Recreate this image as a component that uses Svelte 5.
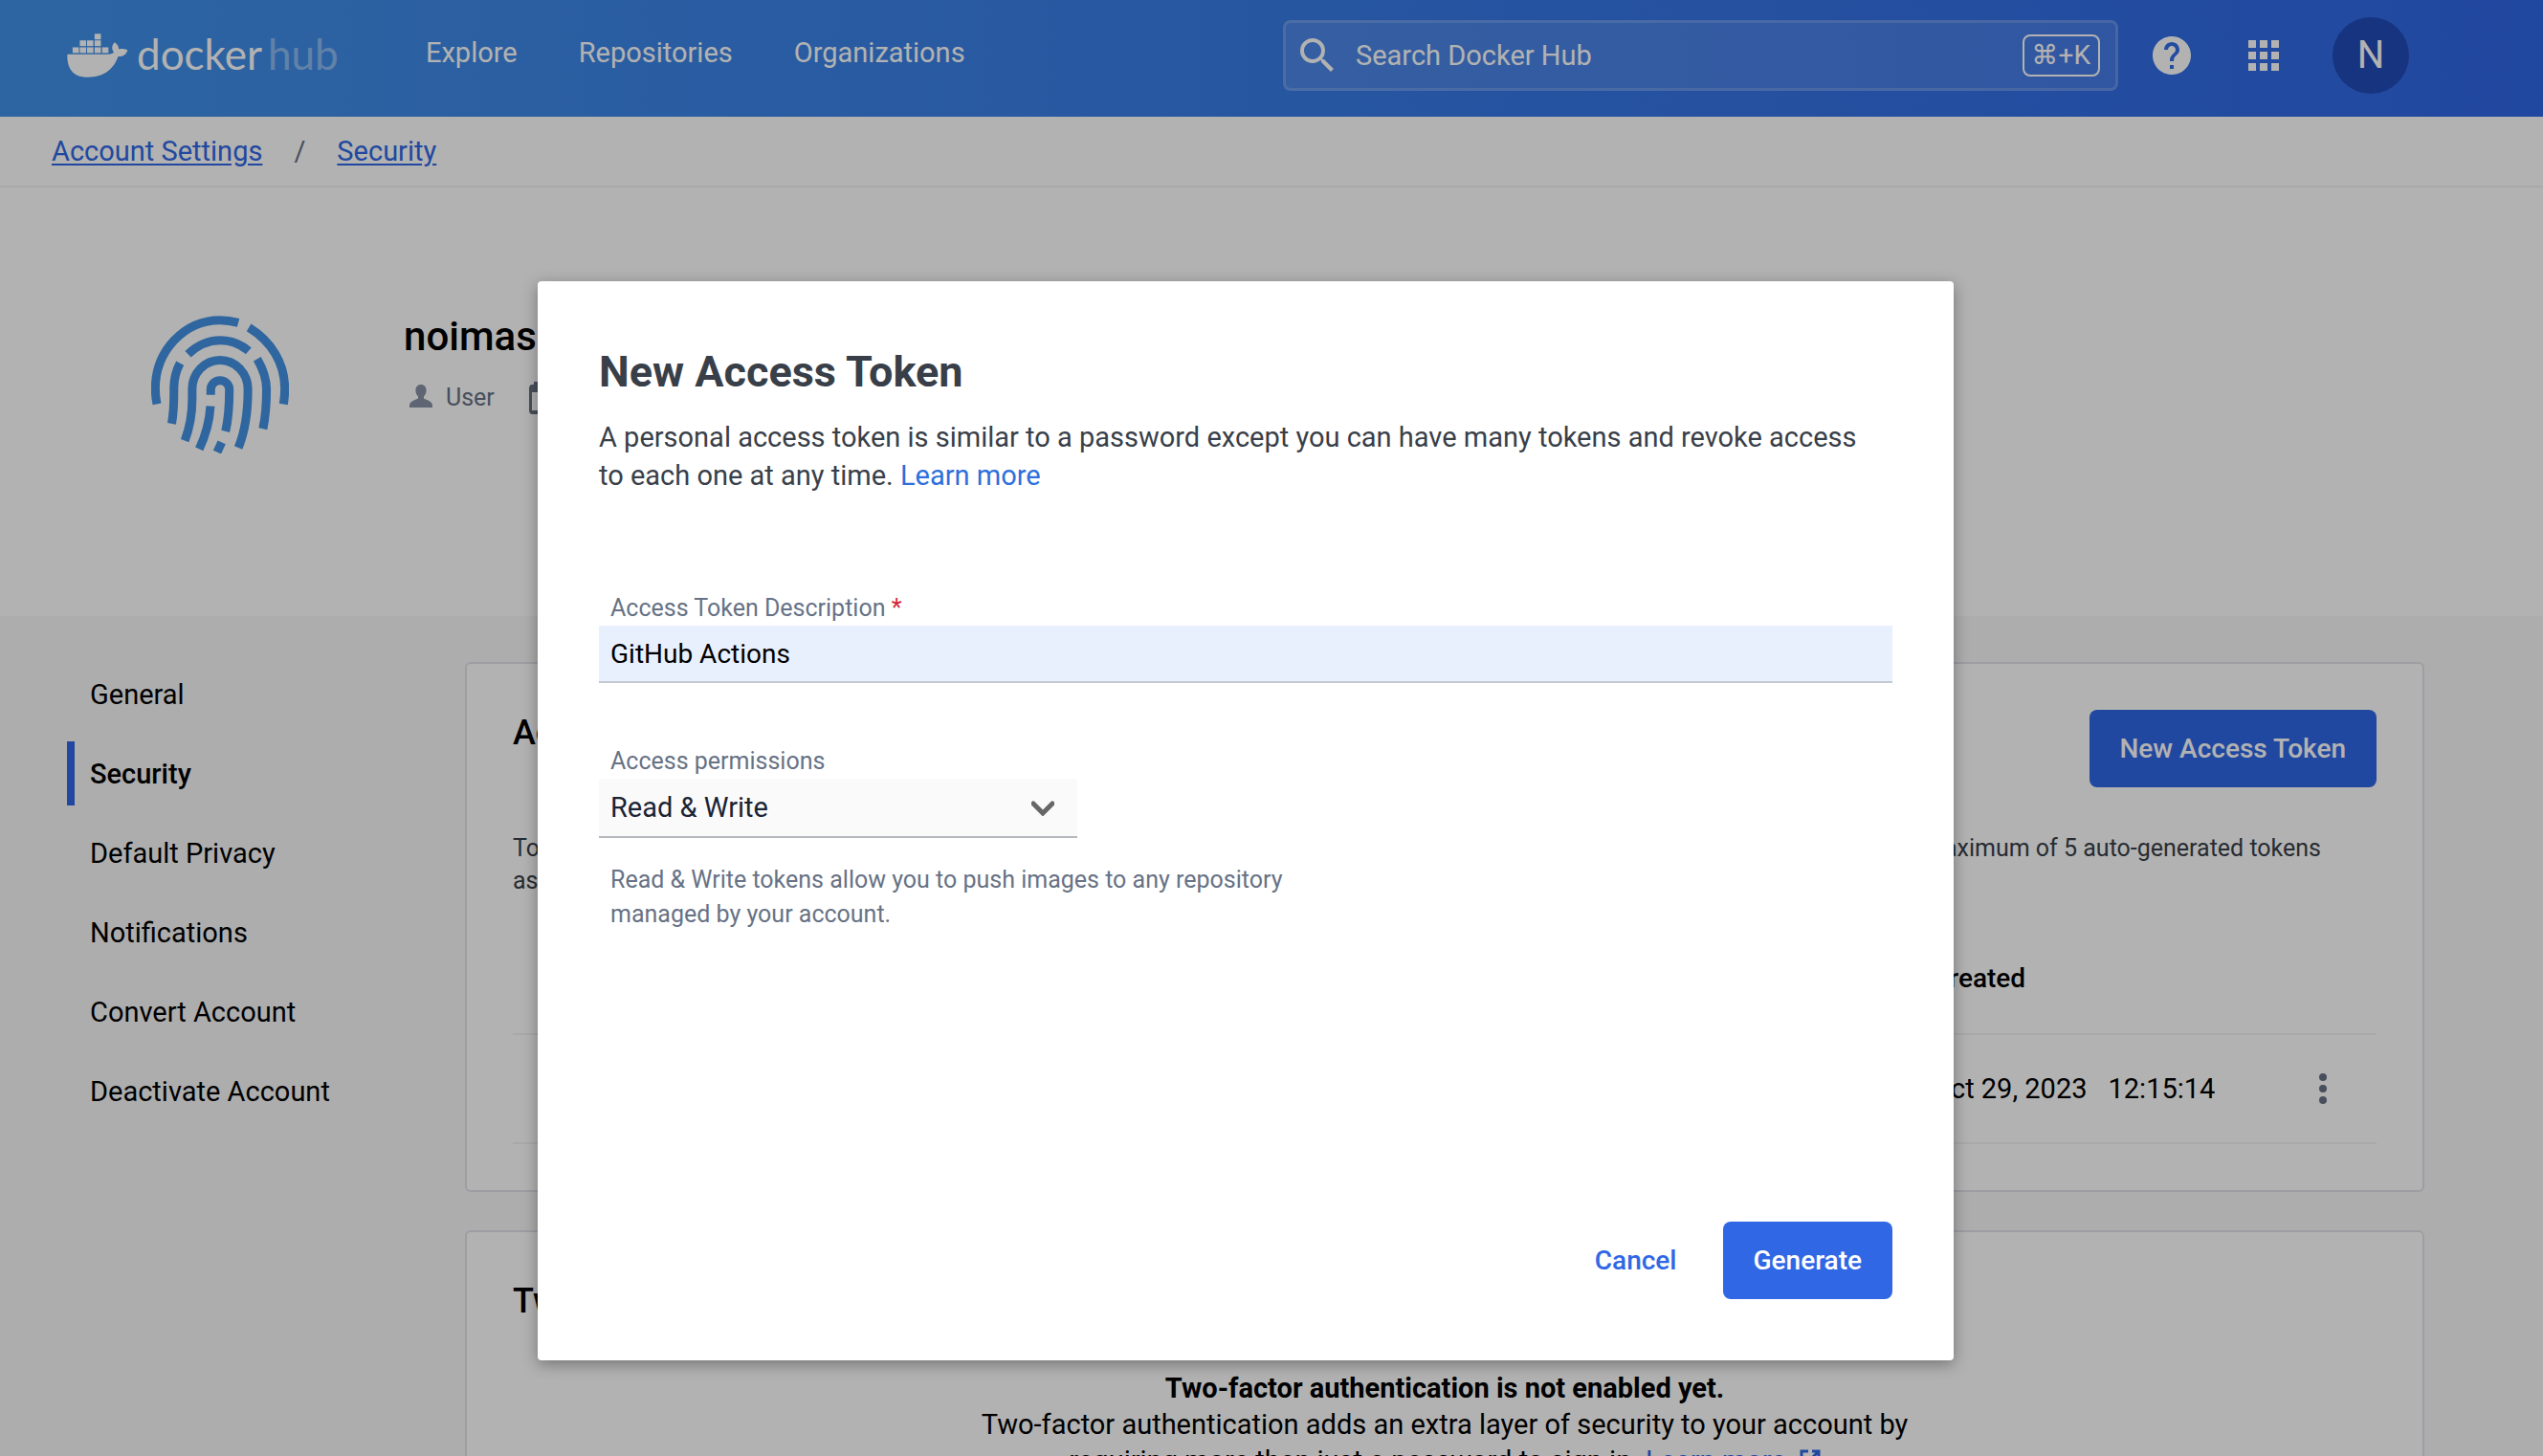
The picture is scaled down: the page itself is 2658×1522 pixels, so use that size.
<script>
  const navLinks = ['Explore', 'Repositories', 'Organizations'];
  const settings = [
    'General',
    'Security',
    'Default Privacy',
    'Notifications',
    'Convert Account',
    'Deactivate Account'
  ];
  const active = 'Security';

  let description = $state('GitHub Actions');
  let permission = $state('Read & Write');
</script>

<div class="page">
  <header class="topbar">
    <a class="brand" href="#home" aria-label="Docker Hub home">
      <svg class="whale" viewBox="60 44 193 140" aria-hidden="true">
        <rect x="147" y="45" width="20" height="18" />
        <rect x="100" y="66" width="20" height="18" />
        <rect x="123" y="66" width="20" height="18" />
        <rect x="147" y="66" width="20" height="18" />
        <rect x="77" y="88" width="20" height="18" />
        <rect x="100" y="88" width="20" height="18" />
        <rect x="123" y="88" width="20" height="18" />
        <rect x="147" y="88" width="20" height="18" />
        <rect x="171" y="88" width="20" height="18" />
        <path
          d="M63 110H190C200 110 206 107 208 104C200 92 202 80 211 72C220 79 224 86 224 94C234 91 245 93 252 97C248 111 236 118 222 117C208 155 180 183 125 183C80 183 60 158 60 113Q60 110 63 110Z"
        />
      </svg>
      <span class="wordmark">docker<span class="hub">hub</span></span>
    </a>
    <nav class="main-nav" aria-label="Main">
      {#each navLinks as link}
        <a href="#{link.toLowerCase()}">{link}</a>
      {/each}
    </nav>
    <label class="search">
      <svg class="icon" viewBox="0 0 24 24" aria-hidden="true">
        <path
          d="M15.5 14h-.79l-.28-.27A6.471 6.471 0 0 0 16 9.5 6.5 6.5 0 1 0 9.5 16c1.61 0 3.09-.59 4.23-1.57l.27.28v.79l5 4.99L20.49 19l-4.99-5zm-6 0C7.01 14 5 11.99 5 9.5S7.01 5 9.5 5 14 7.01 14 9.5 11.99 14 9.5 14z"
        />
      </svg>
      <input type="search" placeholder="Search Docker Hub" aria-label="Search Docker Hub" />
      <kbd>⌘+K</kbd>
    </label>
    <div class="tools">
      <button class="plain" aria-label="Help">
        <svg class="icon" viewBox="0 0 24 24" aria-hidden="true">
          <path
            d="M12 2C6.48 2 2 6.48 2 12s4.48 10 10 10 10-4.48 10-10S17.52 2 12 2zm1 17h-2v-2h2v2zm2.07-7.75l-.9.92C13.45 12.9 13 13.5 13 15h-2v-.5c0-1.1.45-2.1 1.17-2.83l1.24-1.26c.37-.36.59-.86.59-1.41 0-1.1-.9-2-2-2s-2 .9-2 2H8c0-2.21 1.79-4 4-4s4 1.79 4 4c0 .88-.36 1.68-.93 2.25z"
          />
        </svg>
      </button>
      <button class="plain" aria-label="Apps">
        <svg class="icon" viewBox="0 0 24 24" aria-hidden="true">
          <path
            d="M4 8h4V4H4v4zm6 12h4v-4h-4v4zm-6 0h4v-4H4v4zm0-6h4v-4H4v4zm6 0h4v-4h-4v4zm6-10v4h4V4h-4zm-6 4h4V4h-4v4zm6 6h4v-4h-4v4zm0 6h4v-4h-4v4z"
          />
        </svg>
      </button>
      <button class="avatar" aria-label="Account menu">N</button>
    </div>
  </header>

  <nav class="crumbs" aria-label="Breadcrumb">
    <a href="#account">Account Settings</a>
    <span>/</span>
    <a href="#security">Security</a>
  </nav>

  <section class="profile">
    <svg class="fingerprint" viewBox="85 60 430 430" aria-hidden="true">
      <path d="M103 336Q98 312 98 288A202 214 0 0 1 300 74Q328 74 357 82" />
      <path d="M390 97C460 140 502 208 502 288Q502 312 498 336" />
      <path d="M200 180Q246 137 300 137Q350 137 389 170" />
      <path d="M175 208Q156 245 156 285C156 325 157 355 149 397" />
      <path d="M416 195Q445 245 445 290Q445 360 434 413" />
      <path d="M190 450Q213 390 213 320V290A87 91 0 0 1 387 290Q387 400 357 472" />
      <path d="M271 307V290A29 28 0 0 1 329 290Q329 370 317 421" />
      <path d="M270 342Q266 410 235 476" />
      <path d="M305 455L291 486" />
    </svg>
    <div class="who">
      <h1>noimas</h1>
      <div class="meta">
        <svg class="person" viewBox="0 0 24 24" aria-hidden="true">
          <path
            d="M12 0c-3.400 0-5.600 2.600-5.600 6 0 2.700 1.100 5 2.600 6.300v1.900C9 15.500 0 16.700 0 21.500V24h24v-2.500c0-4.800-9-6-9-7.300v-1.900c1.500-1.300 2.600-3.600 2.600-6.300 0-3.400-2.200-6-5.600-6z"
          />
        </svg>
        <span>User</span>
        <svg class="calendar" viewBox="0 0 30 34" aria-hidden="true">
          <path
            d="M27 3h-2V0h-4v3H9V0H5v3H3C1 3 0 5 0 7v23c0 2 1 4 3 4h24c2 0 3-2 3-4V7c0-2-1-4-3-4zm0 27H3V11h24v19z"
          />
        </svg>
      </div>
    </div>
  </section>

  <div class="body">
    <nav class="side" aria-label="Settings">
      {#each settings as item}
        <a href="#{item}" class:current={item === active}>{item}</a>
      {/each}
    </nav>

    <main>
      <section class="card">
        <div class="card-head">
          <h2>Access Tokens</h2>
          <button class="primary">New Access Token</button>
        </div>
        <div class="note">
          <p class="spread"><span>Tokens</span><span>a maximum of 5 auto-generated tokens</span></p>
          <p>associated</p>
        </div>
        <table>
          <thead>
            <tr>
              <th class="name">Description</th>
              <th class="created">Created</th>
              <th class="action" aria-label="Actions"></th>
            </tr>
          </thead>
          <tbody>
            <tr>
              <td></td>
              <td><time>Oct 29, 2023</time><time class="clock">12:15:14</time></td>
              <td class="action">
                <button class="plain" aria-label="Token actions">
                  <svg class="dots" viewBox="0 0 8 32" aria-hidden="true">
                    <circle cx="4" cy="4" r="4" />
                    <circle cx="4" cy="16" r="4" />
                    <circle cx="4" cy="28" r="4" />
                  </svg>
                </button>
              </td>
            </tr>
          </tbody>
        </table>
      </section>

      <section class="card">
        <h2>Two-Factor Authentication</h2>
        <div class="twofa">
          <strong>Two-factor authentication is not enabled yet.</strong>
          <p>
            Two-factor authentication adds an extra layer of security to your account by requiring
            more than just a password to sign in.
            <a href="#2fa"
              >Learn more<svg class="external" viewBox="0 0 22 22" aria-hidden="true">
                <path d="M9 2H2V20H20V13M13 2H20V9M20 2L9 13" />
              </svg></a
            >
          </p>
        </div>
      </section>
    </main>
  </div>

  <div class="backdrop">
    <div class="modal" role="dialog" aria-modal="true" aria-labelledby="modal-title">
      <h2 id="modal-title">New Access Token</h2>
      <p class="intro">
        A personal access token is similar to a password except you can have many tokens and revoke
        access to each one at any time. <a href="#learn">Learn more</a>
      </p>
      <form onsubmit={(e) => e.preventDefault()}>
        <div class="field">
          <label for="description">Access Token Description <span class="star">*</span></label>
          <input id="description" type="text" bind:value={description} />
        </div>
        <div class="field">
          <label for="permission">Access permissions</label>
          <div class="select">
            <select id="permission" bind:value={permission}>
              <option>Read &amp; Write</option>
              <option>Read-only</option>
              <option>Public Repo Read-only</option>
            </select>
            <svg viewBox="0 0 24 16" aria-hidden="true"><path d="M2 3L12 13L22 3" /></svg>
          </div>
          <p class="help">
            Read &amp; Write tokens allow you to push images to any repository managed by your
            account.
          </p>
        </div>
        <div class="actions">
          <button type="button" class="text">Cancel</button>
          <button type="submit" class="primary">Generate</button>
        </div>
      </form>
    </div>
  </div>
</div>

<style>
  :global(body) {
    margin: 0;
    overflow: hidden;
  }

  .page {
    position: relative;
    height: 100vh;
    overflow: hidden;
    background: #f8f8f9;
    color: #000;
    font-family: Roboto, 'Liberation Sans', sans-serif;
    font-size: 29px;
    line-height: 40px;
  }

  .page :is(h1, h2, p) {
    margin: 0;
  }

  button,
  input,
  select {
    box-sizing: border-box;
    margin: 0;
    border: 0;
    font: inherit;
    color: inherit;
  }

  .plain {
    display: flex;
    padding: 0;
    background: none;
  }

  .icon {
    width: 48px;
    height: 48px;
    flex: none;
    fill: currentColor;
  }

  /* Top bar */
  .topbar {
    display: flex;
    align-items: center;
    box-sizing: border-box;
    height: 122px;
    padding: 0 140px 6px 70px;
    background: linear-gradient(90deg, #4191e9, #3067e5);
    color: #fff;
  }

  .topbar a {
    color: inherit;
    text-decoration: none;
  }

  .brand {
    display: flex;
    align-items: center;
    width: 375px;
  }

  .whale {
    width: 64px;
    height: 46px;
    margin-right: 9px;
    fill: currentColor;
  }

  .wordmark {
    padding-bottom: 4px;
    font-family: Lato, sans-serif;
    font-size: 44px;
  }

  .hub {
    margin-left: 6px;
    opacity: 0.4;
  }

  .main-nav {
    display: flex;
    gap: 64px;
    padding-bottom: 6px;
  }

  .search {
    display: flex;
    align-items: center;
    box-sizing: border-box;
    width: 873px;
    height: 74px;
    margin-left: auto;
    padding: 0 16px 0 9px;
    border: 3px solid rgba(255, 255, 255, 0.25);
    border-radius: 8px;
    background: rgba(255, 255, 255, 0.1);
    background-clip: padding-box;
  }

  .search input {
    flex: 1;
    min-width: 0;
    padding: 0 16px;
    background: none;
    outline: none;
  }

  .search input::placeholder {
    color: #fff;
    opacity: 1;
  }

  kbd {
    padding: 0 8px;
    border: 2px solid #fff;
    border-radius: 8px;
    font-family: Roboto, 'DejaVu Sans', sans-serif;
    font-size: 28px;
  }

  .tools {
    display: flex;
    align-items: center;
    gap: 48px;
    margin-left: 32px;
  }

  .avatar {
    width: 80px;
    height: 80px;
    padding: 0;
    border-radius: 50%;
    background: #204bb8;
    font-size: 40px;
  }

  /* Breadcrumb */
  .crumbs {
    display: flex;
    gap: 33px;
    padding: 16px 54px;
    border-bottom: 2px solid #f2f2f4;
    background: #fff;
    color: #677285;
  }

  .crumbs a {
    color: #3067e5;
    text-underline-offset: 3px;
  }

  /* Profile */
  .profile {
    display: flex;
    gap: 120px;
    padding: 134px 158px 170px;
    background: #fff;
  }

  .fingerprint {
    width: 144px;
    height: 144px;
    fill: none;
    stroke: #4493e4;
    stroke-width: 27;
  }

  h1 {
    font-size: 42px;
    font-weight: 500;
    line-height: 44px;
  }

  .meta {
    display: flex;
    align-items: center;
    margin-top: 22px;
    color: #677285;
    font-size: 25px;
  }

  .person {
    width: 24px;
    height: 24px;
    margin: 0 14px 4px 6px;
    fill: #8993a5;
  }

  .calendar {
    width: 30px;
    height: 34px;
    margin-left: 36px;
    fill: #677285;
  }

  /* Settings body */
  .body {
    display: flex;
    align-items: flex-start;
    gap: 48px;
    padding: 48px 124px 0 70px;
  }

  .side {
    display: flex;
    flex-direction: column;
    gap: 16px;
    width: 368px;
    flex: none;
  }

  .side a {
    padding: 14px 16px 13px;
    border-left: 8px solid transparent;
    color: inherit;
    text-decoration: none;
  }

  .side .current {
    border-color: #3067e5;
    font-weight: 500;
  }

  main {
    display: flex;
    flex-direction: column;
    gap: 40px;
    flex: 1;
    min-width: 0;
  }

  .card {
    padding: 48px;
    border: 2px solid #e1e2ea;
    border-radius: 6px;
    background: #fff;
  }

  .card h2 {
    font-size: 36px;
    font-weight: 500;
    line-height: 48px;
  }

  .card-head {
    display: flex;
    justify-content: space-between;
    align-items: flex-start;
  }

  .primary {
    height: 81px;
    padding: 0 32px;
    border-radius: 8px;
    background: #3067e5;
    color: #fff;
    font-size: 28px;
    font-weight: 500;
  }

  .note {
    margin: 47px 58px 28px 0;
    color: #393f49;
    font-size: 25px;
    line-height: 34px;
  }

  .spread {
    display: flex;
    justify-content: space-between;
  }

  table {
    width: 100%;
    border-collapse: collapse;
    table-layout: fixed;
  }

  th,
  td {
    height: 112px;
    padding: 0;
    border-bottom: 2px solid #f2f2f4;
    text-align: left;
    font-weight: 400;
  }

  th {
    height: 114px;
    font-size: 28px;
    font-weight: 500;
  }

  .name {
    padding-left: 80px;
  }

  .created {
    width: 353px;
  }

  .action {
    width: 112px;
  }

  td.action .plain {
    margin: 0 auto;
  }

  .clock {
    margin-left: 22px;
  }

  .dots {
    width: 8px;
    height: 32px;
    fill: #677285;
  }

  .twofa {
    max-width: 1000px;
    margin: 48px auto 0;
    line-height: 38px;
    text-align: center;
  }

  .twofa strong {
    font-weight: 700;
  }

  .twofa a {
    color: #3067e5;
    text-decoration: none;
  }

  .external {
    width: 22px;
    height: 22px;
    margin-left: 14px;
    fill: none;
    stroke: currentColor;
    stroke-width: 3;
  }

  /* Dialog */
  .backdrop {
    position: absolute;
    inset: 0;
    display: flex;
    justify-content: center;
    align-items: flex-start;
    padding: 294px 54px 0 0;
    background: rgba(0, 0, 0, 0.3);
  }

  .modal {
    box-sizing: border-box;
    width: 100%;
    max-width: 1480px;
    padding: 64px;
    border-radius: 4px;
    background: #fff;
    box-shadow: 0 4px 16px rgba(0, 0, 0, 0.35);
    color: #393f49;
  }

  .modal h2 {
    font-size: 45px;
    font-weight: 700;
    line-height: 62px;
  }

  .modal .intro {
    margin: 17px 0 103px;
    padding-right: 20px;
  }

  .intro a {
    color: #2d6fdc;
    text-decoration: none;
  }

  .field {
    display: flex;
    flex-direction: column;
    align-items: flex-start;
    margin-bottom: 66px;
  }

  .field label {
    padding: 0 12px 2px;
    color: #677285;
    font-size: 25px;
    line-height: 32px;
  }

  .star {
    color: #d52536;
  }

  .field input {
    width: 100%;
    height: 60px;
    padding: 0 12px;
    border-bottom: 2px solid #c4c8d1;
    background: #e8effd;
    color: #000;
    font-size: 28px;
    outline: none;
  }

  .select {
    display: grid;
    align-items: center;
    width: 500px;
  }

  .select > * {
    grid-area: 1 / 1;
  }

  select {
    width: 100%;
    height: 62px;
    padding: 0 12px;
    border-bottom: 2px solid #b5b9be;
    border-radius: 0;
    background: #fafafb;
    color: #1b2433;
    appearance: none;
  }

  .select svg {
    justify-self: end;
    width: 24px;
    height: 16px;
    margin-right: 24px;
    fill: none;
    stroke: #666;
    stroke-width: 5;
    stroke-linecap: round;
    pointer-events: none;
  }

  .field .help {
    max-width: 760px;
    margin-top: 26px;
    padding: 0 12px;
    color: #677285;
    font-size: 25px;
    line-height: 36px;
  }

  .field:has(.help) {
    margin-bottom: 303px;
  }

  .actions {
    display: flex;
    justify-content: flex-end;
    gap: 16px;
  }

  .text {
    height: 81px;
    padding: 0 32px;
    background: none;
    color: #3067e5;
    font-size: 28px;
    font-weight: 500;
  }
</style>
